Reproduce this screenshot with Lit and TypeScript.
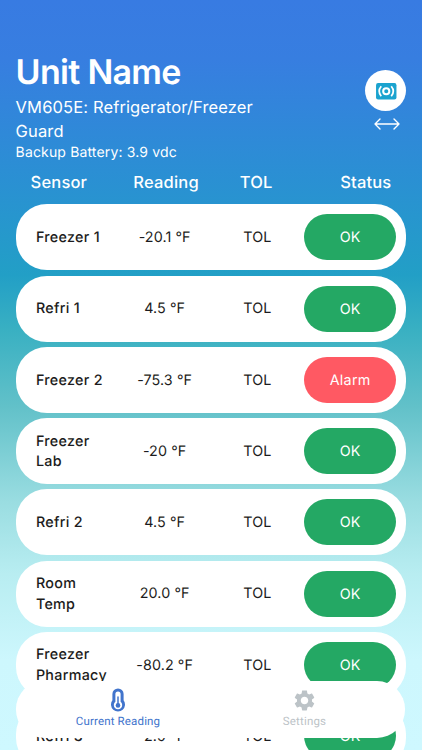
import { LitElement, html, css } from "lit";
import { customElement, property } from "lit/decorators.js";

interface Sensor {
  name: string;
  reading: string;
  status: "OK" | "Alarm";
}

const sensors: Sensor[] = [
  { name: "Freezer 1", reading: "-20.1 °F", status: "OK" },
  { name: "Refri 1", reading: "4.5 °F", status: "OK" },
  { name: "Freezer 2", reading: "-75.3 °F", status: "Alarm" },
  { name: "Freezer Lab", reading: "-20 °F", status: "OK" },
  { name: "Refri 2", reading: "4.5 °F", status: "OK" },
  { name: "Room Temp", reading: "20.0 °F", status: "OK" },
  { name: "Freezer Pharmacy", reading: "-80.2 °F", status: "OK" },
  { name: "Refri 3", reading: "2.9 °F", status: "OK" },
];

@customElement("sensor-row")
export class SensorRow extends LitElement {
  @property({ attribute: false }) sensor!: Sensor;

  static styles = css`
    :host {
      display: grid;
      grid-template-columns: 80px 97.5px 88px 93px;
      align-items: center;
      box-sizing: border-box;
      height: 66px;
      flex: none;
      padding-left: 20.3px;
      border-radius: 31px;
      background: #fff;
      color: #1c1c20;
      font-size: 14.3px;
      line-height: 20.5px;
      text-align: center;
      letter-spacing: 0.1px;
    }
    .text {
      padding-top: 2.4px;
    }
    .name {
      text-align: left;
      font-weight: 500;
      letter-spacing: 0.3px;
    }
    .status {
      box-sizing: border-box;
      height: 46px;
      line-height: 46px;
      padding-top: 1px;
      margin-left: 2.5px;
      width: 92.5px;
      border-radius: 23px;
      background: #24a864;
      color: #fff;
    }
    .alarm {
      background: #ff5963;
      letter-spacing: 0.3px;
    }
  `;

  render() {
    const s = this.sensor;
    return html`
      <span class="text name">${s.name}</span>
      <span class="text">${s.reading}</span>
      <span class="text">TOL</span>
      <span class="status ${s.status === "Alarm" ? "alarm" : ""}">${s.status}</span>
    `;
  }
}

@customElement("app-root")
export class AppRoot extends LitElement {
  static styles = css`
    :host {
      display: flex;
      flex-direction: column;
      position: relative;
      box-sizing: border-box;
      width: 422px;
      height: 750px;
      overflow: hidden;
      padding: 52px 15.6px 0 15.6px;
      font-family: Inter, "Liberation Sans", sans-serif;
      text-rendering: geometricPrecision;
      color: #fff;
      background: linear-gradient(
        180deg,
        #387be2 0,
        #377ee0 60px,
        #2a90d3 180px,
        #229fc6 275px,
        #39b0c2 330px,
        #62c1c9 407px,
        #9adde1 502px,
        #b8edf1 574px,
        #cdf7fd 660px,
        #cef8ff 750px
      );
    }
    header {
      display: flex;
      justify-content: space-between;
      height: 114px;
      flex: none;
    }
    .info {
      width: 270px;
    }
    h1 {
      margin: 0;
      font-size: 34px;
      line-height: 41px;
      font-weight: 600;
      letter-spacing: -0.7px;
    }
    .model {
      margin-top: 2px;
      font-size: 16.5px;
      line-height: 24px;
      letter-spacing: 0.13px;
    }
    .battery {
      margin-top: 1px;
      font-size: 14px;
      line-height: 18px;
      letter-spacing: 0.15px;
    }
    .actions {
      display: flex;
      flex-direction: column;
      align-items: center;
      padding-top: 18.4px;
      gap: 7px;
    }
    .round {
      display: grid;
      place-items: center;
      width: 41px;
      height: 41px;
      border-radius: 50%;
      background: #fff;
    }
    svg {
      display: block;
    }
    .arrow {
      margin-left: 1.5px;
    }
    .heads {
      display: grid;
      grid-template-columns: 100px 101px 79px 1fr;
      align-items: center;
      height: 32px;
      flex: none;
      margin-bottom: 6.3px;
      font-size: 16.5px;
      font-weight: 500;
      letter-spacing: 0.18px;
      text-align: center;
    }
    .first {
      text-align: left;
      padding-left: 15px;
    }
    .last {
      text-align: right;
      padding-right: 15px;
    }
    .rows {
      display: flex;
      flex-direction: column;
      gap: 5.25px;
    }
    nav {
      position: absolute;
      left: 16px;
      right: 17px;
      top: 680.6px;
      height: 57px;
      display: grid;
      grid-template-columns: 204px 169px;
      border-radius: 28px;
      background: #fff;
    }
    .tab {
      display: flex;
      flex-direction: column;
      align-items: center;
      padding-top: 7.5px;
      font-size: 11.5px;
      line-height: 15px;
      letter-spacing: 0.16px;
      font-family: Roboto, sans-serif;
      color: #bcc3c7;
    }
    .tab svg {
      margin-bottom: 1px;
    }
    .active {
      color: #4174cc;
    }
  `;

  render() {
    return html`
      <header>
        <div class="info">
          <h1>Unit Name</h1>
          <div class="model">VM605E: Refrigerator/Freezer Guard</div>
          <div class="battery">Backup Battery: 3.9 vdc</div>
        </div>
        <div class="actions">
          <div class="round">
            <svg width="24.5" height="24.5" viewBox="0 0 24 24" fill="none" stroke="#fff">
              <rect x="2" y="4" width="20" height="16" rx="2" fill="#1ba3cf" stroke="none" />
              <circle cx="12" cy="12" r="3" stroke-width="2" />
              <path d="M7.1 7.1Q3 12 7.1 16.9M16.9 7.1Q21 12 16.9 16.9" stroke-width="1.7" />
            </svg>
          </div>
          <svg class="arrow" width="26" height="12" viewBox="0 0 26 12" fill="none" stroke="#fff" stroke-width="1.4" stroke-linecap="round" stroke-linejoin="round">
            <path d="M1 6H25M6 1L1 6L6 11M20 1L25 6L20 11" />
          </svg>
        </div>
      </header>
      <div class="heads">
        <span class="first">Sensor</span>
        <span>Reading</span>
        <span>TOL</span>
        <span class="last">Status</span>
      </div>
      <div class="rows">
        ${sensors.map((s) => html`<sensor-row .sensor=${s}></sensor-row>`)}
      </div>
      <nav>
        <div class="tab active">
          <svg width="16" height="25" viewBox="0 0 16 25">
            <path d="M8 0.4A5.6 5.6 0 0 0 2.4 6V12.3A7 7 0 1 0 13.6 12.3V6A5.6 5.6 0 0 0 8 0.4Z" fill="currentColor" />
            <path d="M8 3.4A2.6 2.6 0 0 0 5.4 6V13.8A4.2 4.2 0 1 0 10.6 13.8V6A2.6 2.6 0 0 0 8 3.4Z" fill="#fff" />
            <path d="M8 9V17" stroke="currentColor" stroke-width="1.5" stroke-linecap="round" />
            <circle cx="8" cy="17.4" r="2.3" fill="currentColor" />
          </svg>
          <span>Current Reading</span>
        </div>
        <div class="tab">
          <svg width="25" height="25" viewBox="0 0 24 24">
            <path fill="currentColor" d="M19.14 12.94c.04-.3.06-.61.06-.94 0-.32-.02-.64-.07-.94l2.03-1.58c.18-.14.23-.41.12-.61l-1.92-3.32c-.12-.22-.37-.29-.59-.22l-2.39.96c-.5-.38-1.03-.7-1.62-.94l-.36-2.54c-.04-.24-.24-.41-.48-.41h-3.84c-.24 0-.43.17-.47.41l-.36 2.54c-.59.24-1.13.57-1.62.94l-2.39-.96c-.22-.08-.47 0-.59.22L2.74 8.87c-.12.21-.08.47.12.61l2.03 1.58c-.05.3-.09.63-.09.94s.02.64.07.94l-2.03 1.58c-.18.14-.23.41-.12.61l1.92 3.32c.12.22.37.29.59.22l2.39-.96c.5.38 1.03.7 1.62.94l.36 2.54c.05.24.24.41.48.41h3.84c.24 0 .44-.17.47-.41l.36-2.54c.59-.24 1.13-.56 1.62-.94l2.39.96c.22.08.47 0 .59-.22l1.92-3.32c.12-.22.07-.47-.12-.61l-2.01-1.58zM12 15.6c-1.98 0-3.6-1.62-3.6-3.6s1.62-3.6 3.6-3.6 3.6 1.62 3.6 3.6-1.62 3.6-3.6 3.6z" />
          </svg>
          <span>Settings</span>
        </div>
      </nav>
    `;
  }
}
